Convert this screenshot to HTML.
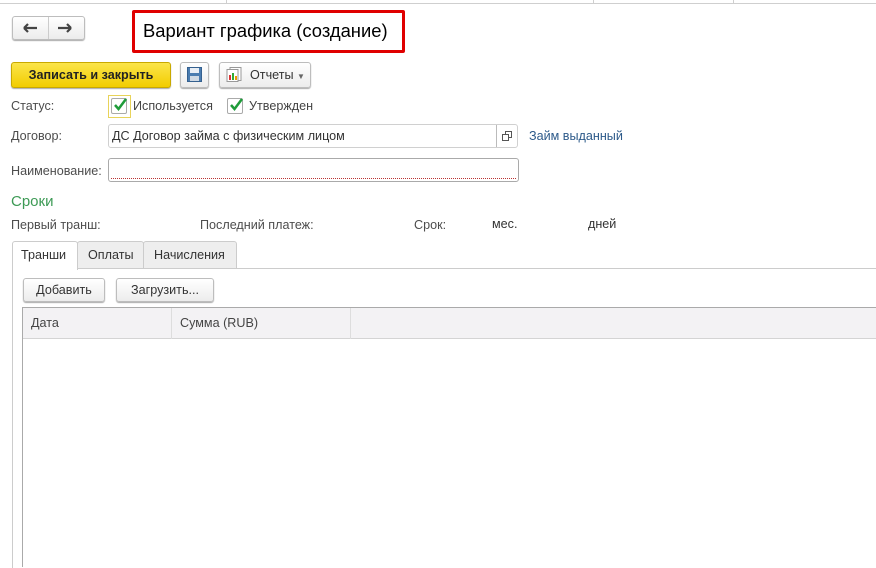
<!DOCTYPE html>
<html><head><meta charset="utf-8"><style>
*{margin:0;padding:0;box-sizing:border-box}
body{width:876px;height:565px;overflow:hidden;background:#fff;font-family:"Liberation Sans",sans-serif;font-size:12.6px;color:#444;position:relative}
.a{position:absolute}
.btn{position:absolute;border:1px solid #bdbdbd;border-radius:3px;background:linear-gradient(#fff,#ececec);box-shadow:0 1px 1px #aaa;text-align:center;color:#333;font-size:12.6px}
.lbl{position:absolute;color:#4d4d4d;font-size:12.6px}
.cb{position:absolute;width:16px;height:16px;border:1px solid #aaa;background:#fff;border-radius:2px}
</style></head><body>
<div class="a" style="left:0;top:0;width:876px;height:4px;border-bottom:1px solid #cfcfcf"></div>
<div class="a" style="left:226px;top:0;width:1px;height:4px;background:#cfcfcf"></div>
<div class="a" style="left:593px;top:0;width:1px;height:4px;background:#cfcfcf"></div>
<div class="a" style="left:733px;top:0;width:1px;height:4px;background:#cfcfcf"></div>

<div class="btn" style="left:12px;top:16px;width:73px;height:24px"></div>
<div class="a" style="left:48px;top:17px;width:1px;height:22px;background:#ccc"></div>
<svg class="a" style="left:12px;top:21px" width="73" height="14"><path d="M12 7h13M12 7l4-4M12 7l4 4" stroke="#444" stroke-width="2.2" fill="none"/><path d="M59 7h-13M59 7l-4-4M59 7l-4 4" stroke="#444" stroke-width="2.2" fill="none"/></svg>

<div class="a" style="left:132px;top:10px;width:273px;height:43px;border:3px solid #e00000;border-radius:2px"></div>
<div class="a" style="left:143px;top:20px;font-size:18.4px;color:#000">Вариант графика (создание)</div>

<div class="btn" style="left:11px;top:62px;width:160px;height:26px;background:linear-gradient(#fbe54a,#f2cd00);border-color:#c9a900;font-weight:bold;color:#222;line-height:24px">Записать и закрыть</div>
<div class="btn" style="left:180px;top:62px;width:29px;height:26px"></div>
<svg class="a" style="left:187px;top:67px" width="15" height="15"><rect x="0.5" y="0.5" width="14" height="14" fill="#4a7cb0" stroke="#35608f"/><rect x="3" y="1" width="9" height="5" fill="#e8eef5"/><rect x="3" y="9" width="9" height="5" fill="#cfd9e4"/></svg>
<div class="btn" style="left:219px;top:62px;width:92px;height:26px;line-height:24px;text-align:left;padding-left:30px">Отчеты <span style="font-size:8px;color:#666">▼</span></div>
<svg class="a" style="left:226px;top:67px" width="16" height="15"><rect x="4" y="0.5" width="11" height="13" fill="#fff" stroke="#999"/><rect x="1" y="2.5" width="11" height="12" fill="#fff" stroke="#999"/><rect x="3" y="8" width="2" height="5" fill="#d33"/><rect x="6" y="6" width="2" height="7" fill="#3a3"/><rect x="9" y="9" width="2" height="4" fill="#e90"/></svg>

<div class="lbl" style="left:11px;top:99px">Статус:</div>
<div class="a" style="left:108px;top:95px;width:23px;height:23px;border:1px solid #e8d35a"></div>
<div class="cb" style="left:111px;top:98px"></div>
<svg class="a" style="left:112px;top:97px" width="16" height="16"><path d="M3 8l3.5 4L14 2" stroke="#1f9c3a" stroke-width="2.5" fill="none"/></svg>
<div class="a" style="left:133px;top:99px;color:#444">Используется</div>
<div class="cb" style="left:227px;top:98px"></div>
<svg class="a" style="left:228px;top:97px" width="16" height="16"><path d="M3 8l3.5 4L14 2" stroke="#1f9c3a" stroke-width="2.5" fill="none"/></svg>
<div class="a" style="left:249px;top:99px;color:#444">Утвержден</div>

<div class="lbl" style="left:11px;top:129px">Договор:</div>
<div class="a" style="left:108px;top:124px;width:410px;height:24px;border:1px solid #d0d0d0;border-radius:3px"></div>
<div class="a" style="left:496px;top:125px;width:1px;height:22px;background:#bbb"></div>
<div class="a" style="left:112px;top:129px;color:#333">ДС Договор займа с физическим лицом</div>
<svg class="a" style="left:502px;top:131px" width="11" height="11"><rect x="3.5" y="0.5" width="6" height="6" fill="none" stroke="#555"/><rect x="0.5" y="3.5" width="6" height="6" fill="#fff" stroke="#555"/></svg>
<div class="a" style="left:529px;top:129px;color:#2d5a8a">Займ выданный</div>

<div class="lbl" style="left:11px;top:164px">Наименование:</div>
<div class="a" style="left:108px;top:158px;width:411px;height:24px;border:1px solid #aaa;border-radius:3px"></div>
<div class="a" style="left:111px;top:178px;width:405px;border-top:1px dotted #b33"></div>

<div class="a" style="left:11px;top:193px;font-size:15px;color:#3d9a55">Сроки</div>
<div class="lbl" style="left:11px;top:218px">Первый транш:</div>
<div class="lbl" style="left:200px;top:218px">Последний платеж:</div>
<div class="lbl" style="left:414px;top:218px">Срок:</div>
<div class="a" style="left:492px;top:217px;color:#333">мес.</div>
<div class="a" style="left:588px;top:217px;color:#333">дней</div>

<div class="a" style="left:12px;top:268px;width:870px;height:300px;border-left:1px solid #ccc;border-top:1px solid #ccc"></div>
<div class="a" style="left:77px;top:241px;width:67px;height:28px;background:#eee;border:1px solid #ccc;border-radius:3px 3px 0 0"></div>
<div class="a" style="left:143px;top:241px;width:94px;height:28px;background:#eee;border:1px solid #ccc;border-radius:3px 3px 0 0"></div>
<div class="a" style="left:12px;top:241px;width:66px;height:29px;background:#fff;border:1px solid #ccc;border-bottom:none;border-radius:3px 3px 0 0"></div>
<div class="a" style="left:21px;top:248px;color:#333">Транши</div>
<div class="a" style="left:88px;top:248px;color:#333">Оплаты</div>
<div class="a" style="left:154px;top:248px;color:#333">Начисления</div>

<div class="btn" style="left:23px;top:278px;width:82px;height:24px;line-height:22px">Добавить</div>
<div class="btn" style="left:116px;top:278px;width:98px;height:24px;line-height:22px">Загрузить...</div>

<div class="a" style="left:22px;top:307px;width:860px;height:260px;border-left:1px solid #aaa;border-top:1px solid #aaa"></div>
<div class="a" style="left:23px;top:308px;width:860px;height:31px;background:#f3f2f4;border-bottom:1px solid #d4d4d4"></div>
<div class="a" style="left:171px;top:308px;width:1px;height:31px;background:#ddd"></div>
<div class="a" style="left:350px;top:308px;width:1px;height:31px;background:#ddd"></div>
<div class="a" style="left:31px;top:316px;color:#444">Дата</div>
<div class="a" style="left:180px;top:316px;color:#444">Сумма (RUB)</div>
</body></html>
